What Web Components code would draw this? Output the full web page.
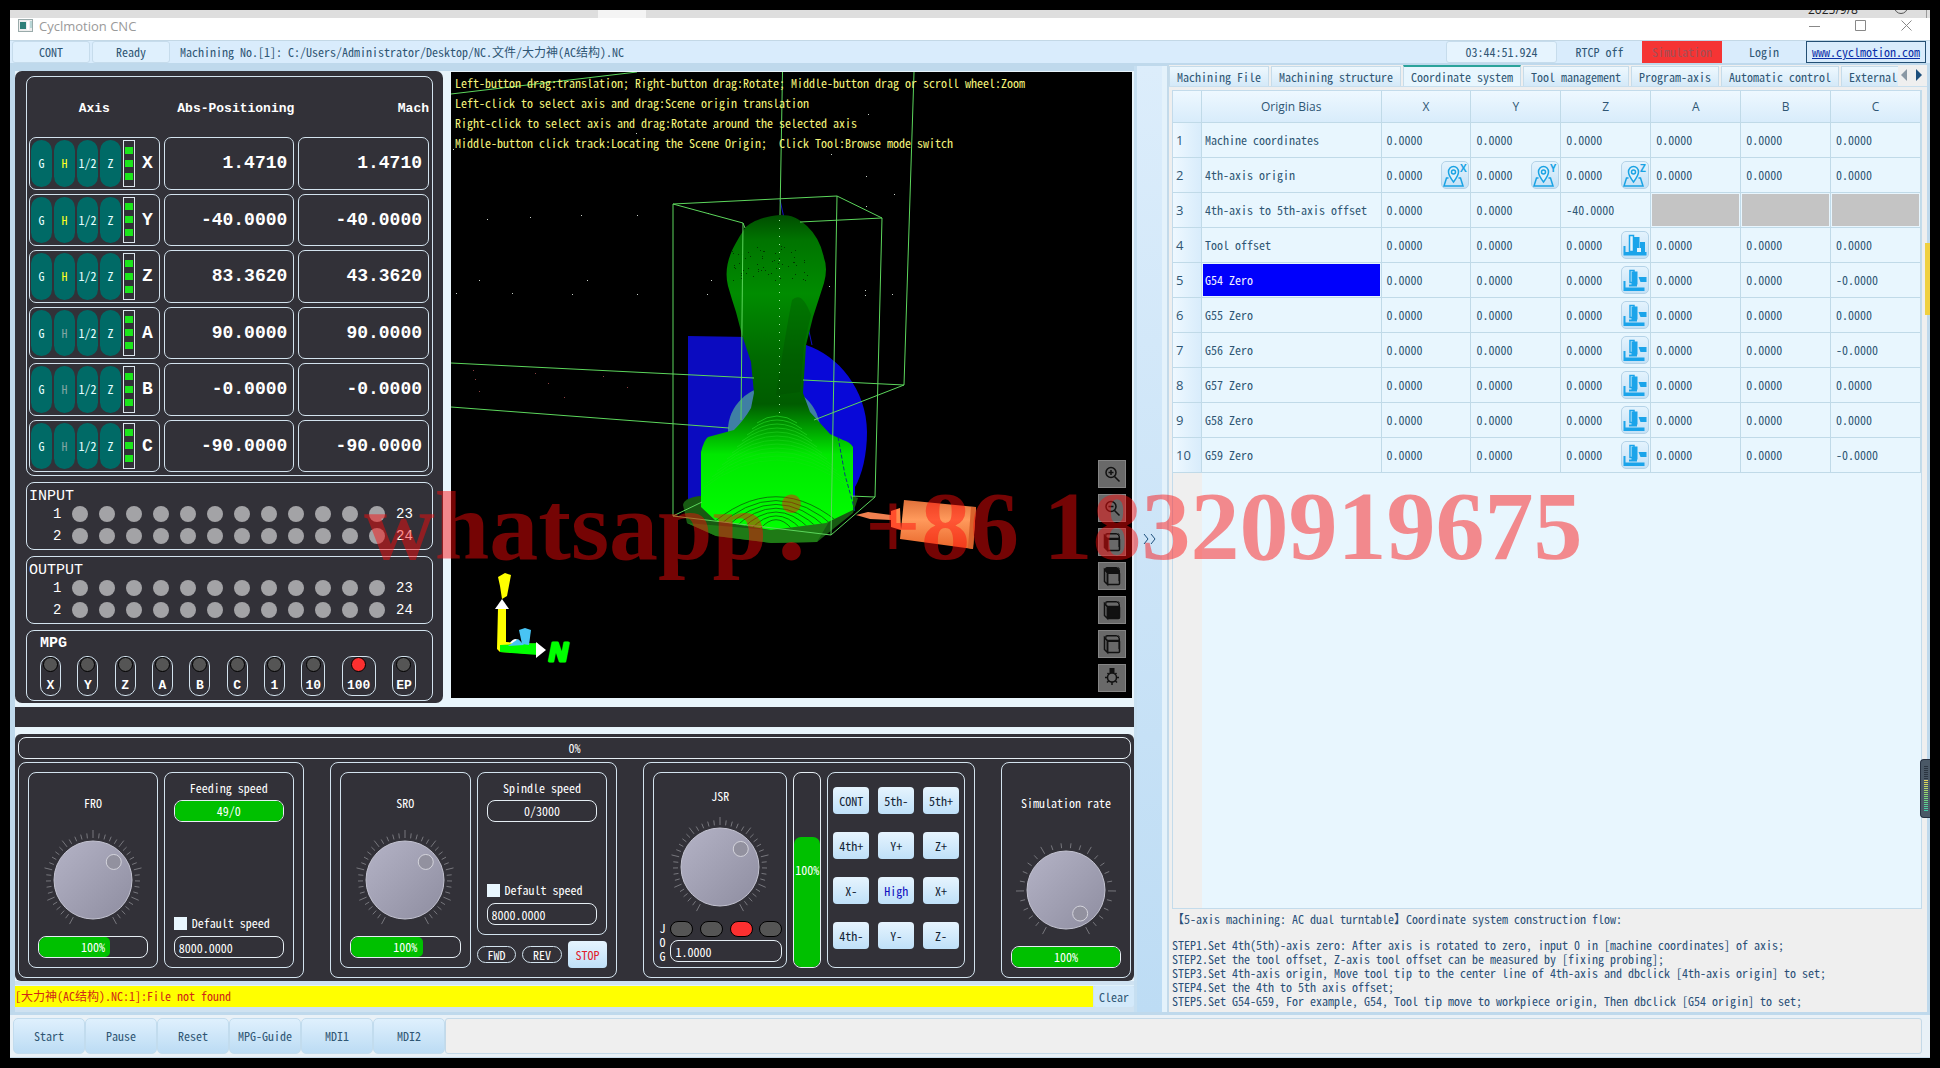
<!DOCTYPE html>
<html lang="en">
<head>
<meta charset="utf-8">
<title>Cyclmotion CNC</title>
<style>
html,body{margin:0;height:100%;background:#000}
body{
  --mono:"Noto Sans Mono CJK SC","Liberation Mono","Noto Sans CJK SC",monospace;
  --slab:"Liberation Mono","Noto Sans CJK SC",monospace;
  --ui:"Open Sans","Noto Sans",sans-serif;
  --ink:#2f5674; --dark:#323138; --line:#d3e3ee; --sky:#e8f6fe; --edge:#bfd9ec;
  --button:linear-gradient(#e6f4fe,#bfe0f8);
  font:12px/14px var(--mono);color:var(--ink);overflow:hidden}
</style>
</head>
<body>
<cnc-app></cnc-app>
<script>
const BASE = `*{box-sizing:border-box}button,input{font:inherit;color:inherit;margin:0;padding:0}button{cursor:pointer;border:0;background:none}`;
function define(name, css, render){
  customElements.define(name, class extends HTMLElement{
    connectedCallback(){
      if(this.shadowRoot) return;
      const root = this.attachShadow({mode:'open'});
      root.innerHTML = `<style>${BASE}${css}</style>` + render(this);
    }
  });
}
const attr = (el, n, d='') => el.getAttribute(n) ?? d;

/* ---------- window chrome ---------- */
define('cnc-desktop-strip', `
:host{display:flex;height:8px;background:#dedede;overflow:hidden;justify-content:flex-end;align-items:flex-end;color:#222}
.tab{width:48px;height:8px;background:#f4f4f4;margin-right:auto;margin-left:30.6%}
.date{font:12px/13px var(--ui);width:66px;height:13px;margin-bottom:2px}
.moon{width:14px;height:14px;border:1px solid #555;border-radius:50%;margin:0 18px 4px 20px;flex:none}
.end{width:1px;height:8px;background:#999;margin-right:3px}`,
()=>`<span class="tab"></span><span class="date">2025/9/8</span><span class="moon"></span><span class="end"></span>`);

define('cnc-titlebar', `
:host{display:flex;height:22px;background:#fff;align-items:center;padding:0 8px 7px 8px;gap:6px;font:13px/16px var(--ui);color:#9a9a9a}
.title{flex:1}
button{width:32px;height:16px;margin-left:8px}button svg{display:block;margin:auto}`,
()=>`<svg width="15" height="13" viewBox="0 0 15 13"><rect x=".5" y=".5" width="14" height="12" fill="#eee" stroke="#9aa"/><rect x="2" y="3" width="6" height="7" fill="#2f7f78"/><rect x="9" y="2" width="2" height="9" fill="#fff"/><rect x="12" y="2" width="2" height="7" fill="#b8d6d6"/></svg>
<span class="title">Cyclmotion CNC</span>
<button aria-label="Minimize"><svg width="11" height="11"><path d="M0 6.5h11" stroke="#888"/></svg></button>
<button aria-label="Maximize"><svg width="11" height="11"><path d="M.5.5h10v10h-10z" stroke="#888" fill="none"/></svg></button>
<button aria-label="Close"><svg width="11" height="11"><path d="M.5.5l10 10M10.500.5l-10 10" stroke="#888"/></svg></button>`);

define('cnc-toolbar', `
:host{display:flex;height:23px;background:#d9ecfc;border-top:1px solid #c3d8e6;padding:0 4px 0 2px;align-items:stretch}
.box{border:1px solid #c6dcec;border-radius:3px;background:#dff0fd;display:flex;align-items:center;justify-content:center}
.state{width:78px;margin-right:2px}
.path{flex:1;padding-left:8px;align-self:center}
.time{width:111px;background:#e6f4fe}.rtcp{width:85px}.sim{width:80px}.login{width:84px}
.plain{display:flex;align-items:center;justify-content:center}
.sim{background:#f53434;color:#a35058}
a{width:120px;border:1px solid #234f74;color:#0b2ea8;text-decoration:underline;display:flex;align-items:center;justify-content:center}`,
()=>`<span class="box state">CONT</span><span class="box state">Ready</span>
<span class="path">Machining No.[1]: C:/Users/Administrator/Desktop/NC.文件/大力神(AC结构).NC</span>
<span class="box time">03:44:51.924</span><button class="plain rtcp">RTCP off</button><button class="plain sim">Simulation</button><button class="plain login">Login</button><a href="#">www.cyclmotion.com</a>`);

/* ---------- axis panel ---------- */
define('axis-row', `
:host{display:grid;grid-template-columns:repeat(3,minmax(0,1fr));gap:4px;color:#fff;flex:1;min-height:0}
.cell{border:1px solid var(--line);border-radius:7px;display:flex;align-items:center;justify-content:flex-end;padding:2px 6px;font:bold 18px/22px var(--slab)}
.ctl{padding:2px 1px;gap:2px;font:12px/14px var(--mono);justify-content:flex-start;align-items:stretch}
button{width:21px;border-radius:11px;background:#006a66;color:#e6ffff;text-align:center}
.h{color:#ffff20}.off{color:#7fa5a2}
.led{width:12px;border:1px solid #dce6ee;display:flex;flex-direction:column;align-items:center;justify-content:center;gap:6px}
.led i{width:8px;height:7px;background:#1be61b}
b{flex:1;font:bold 18px/22px var(--slab);align-self:center;text-align:center}`,
el=>`<div class="cell ctl"><button>G</button><button class="${el.hasAttribute('homed')?'h':'off'}">H</button><button>1/2</button><button>Z</button><span class="led"><i></i><i></i><i></i></span><b>${attr(el,'axis')}</b></div>
<div class="cell">${attr(el,'abs')}</div><div class="cell">${attr(el,'mach')}</div>`);

define('io-block', `
:host{display:block;border:1px solid var(--line);border-radius:8px;color:#fff;height:68px;padding:4px 0 0 2px;font:15px/20px var(--slab)}
.title{height:16px}
.row{display:flex;align-items:center;height:22px;padding-left:24px;gap:11px;font-size:14px}
.row span{width:9px}.row i{width:16px;height:16px;border-radius:50%;background:#a3a3a6}
.row .n{width:20px}.row span+i{margin-left:-1px}`,
el=>{const dots='<i></i>'.repeat(12);return `<div class="title">${attr(el,'name')}</div><div class="row"><span>1</span>${dots}<span class="n">23</span></div><div class="row"><span>2</span>${dots}<span class="n">24</span></div>`});

define('mpg-block', `
:host{display:block;border:1px solid var(--line);border-radius:8px;height:71px;color:#fff;font:bold 15px/20px var(--slab);padding:3px 16px 4px 13px}
.row{display:flex;justify-content:space-between;margin-top:2px}
label{min-width:20px;padding:0 2px;height:40px;border:1px solid var(--line);border-radius:10px;display:flex;flex-direction:column;align-items:center;justify-content:space-between;font:bold 13px/16px var(--slab);padding-bottom:1px}
input{appearance:none;width:15px;height:15px;border:1px solid #000;border-radius:50%;background:#555}
input:checked{background:#fb3030}
.w2{min-width:24px}.w3{min-width:34px}`,
()=>`<div>MPG</div><div class="row">${['X','Y','Z','A','B','C','1','10','100','EP'].map(t=>`<label class="w${t.length}"><input type="radio" name="mpg" ${t==='100'?'checked':''}>${t}</label>`).join('')}</div>`);

define('axis-panel', `
:host{display:flex;flex-direction:column;gap:6px;background:var(--dark);border-radius:7px;padding:5px 10px 2px 11px}
.axes{flex:1;min-height:0;display:flex;flex-direction:column;border:1px solid var(--line);border-radius:8px;padding:0 3px 3px 2px}
.head{display:grid;grid-template-columns:repeat(3,minmax(0,1fr));gap:4px;height:60px;padding-top:4px;align-items:center;color:#fff;font:bold 13px/16px var(--slab);text-align:right}
.head :first-child{text-align:center}
.rows{flex:1;min-height:0;display:flex;flex-direction:column;gap:4px}`,
()=>`<div class="axes"><div class="head"><span>Axis</span><span>Abs-Positioning</span><span>Mach</span></div><div class="rows">
<axis-row axis="X" homed abs="1.4710" mach="1.4710"></axis-row>
<axis-row axis="Y" homed abs="-40.0000" mach="-40.0000"></axis-row>
<axis-row axis="Z" homed abs="83.3620" mach="43.3620"></axis-row>
<axis-row axis="A" abs="90.0000" mach="90.0000"></axis-row>
<axis-row axis="B" abs="-0.0000" mach="-0.0000"></axis-row>
<axis-row axis="C" abs="-90.0000" mach="-90.0000"></axis-row></div></div>
<io-block name="INPUT"></io-block><io-block name="OUTPUT"></io-block><mpg-block></mpg-block>`);

/* ---------- 3D view ---------- */
const cube = face => `<path d="M7 9l2-3h12v13" fill="none" stroke="#111"/><path d="M6.500 7.500l3 3v12l-3-3z" fill="${face==='left'?'#111':'none'}" stroke="#111" stroke-width="1.500"/><path d="M6.500 7l2-1.500h10l3 3v3H9.500z" fill="${face==='top'?'#111':'none'}" stroke="#111"/><rect x="9.500" y="10.500" width="12" height="12" rx="1" fill="${face==='front'?'#111':'none'}" stroke="#111" stroke-width="1.500"/>`;
const viewIcons = {
  'Zoom in':'<circle cx="13" cy="12.500" r="5" fill="none" stroke="#111" stroke-width="1.500"/><path d="M13 10v5M10.500 12.500h5M16.500 16.500l5 5" stroke="#111" stroke-width="1.500"/>',
  'Zoom out':'<circle cx="13" cy="12.500" r="5" fill="none" stroke="#111" stroke-width="1.500"/><path d="M10.500 12.500h5M16.500 16.500l5 5" stroke="#111" stroke-width="1.500"/>',
  'Left view':cube('left'),'Top view':cube('top'),'Front view':cube('front'),'Isometric view':cube(''),
  'Light':'<rect x="11.500" y="4" width="5" height="5" fill="#111"/><circle cx="14" cy="13.500" r="4.500" fill="none" stroke="#111" stroke-width="1.500"/><path d="M7 13.500h2.500M18.500 13.500H21M9 18.500l2-2M19 18.500l-2-2M14 18V21M9.500 9l1.500 1.500M18.500 9l-1.500 1.500" stroke="#111" stroke-width="1.500"/>'
};
const stars = [[453,149],[487,219],[530,217],[581,215],[637,215],[708,213],[868,114],[866,176],[896,81],[831,154],[894,194],[866,206],[479,280],[587,280],[711,280],[456,293],[512,293],[572,294],[637,294],[707,294],[865,290],[865,295],[892,294],[829,286],[636,133],[713,128],[473,370],[535,373],[603,376],[548,383],[475,379],[627,387],[479,391],[564,397]];
const contours = (()=>{let s='';
  for(let i=0;i<12;i++){const y=416+i*4,w=20+i*5,h=7+i*2;s+=`<path d="M${777-w} ${y+h}Q777 ${y-h} ${777+w} ${y+h}" stroke="#28dc28" stroke-opacity="${.65-i*.04}"/>`}
  for(let i=0;i<7;i++){const r=16+i*9;s+=`<path d="M${776-r} 529Q776 ${524-r*.85} ${776+r} 529" stroke="#0a7a0a"/>`}
  return s})();
const speckle = (()=>{let s='',k=7;for(let i=0;i<60;i++){k=(k*137+71)%1009;const x=732+k%76;k=(k*137+71)%1009;s+=`<rect x="${x}" y="${246+k%36}" width="1" height="1"/>`}return s})();
const bodyPath = 'M780 215C764 216 750 222 745 228C737 240 732 250 731 253Q724 270 728 286Q732 300 736 312L742 335L751 362L754 393L751 408Q744 420 734 430L708 437Q704 440 701 452V507L716 521L771 530L826 523L853 510V447Q850 442 843 440L830 434L810 412L803 393L806 345L813 317L824 283Q828 268 824 258Q820 238 807 226C798 218 792 215 780 215Z';

define('scene-view', `
:host{display:grid;position:relative;background:#000;overflow:hidden;min-height:0;min-width:0}
.scene{grid-area:1/1;width:100%;height:100%;min-height:0;display:block}
.help{grid-area:1/1;margin:0;padding:1px 4px;color:#f4f47c;line-height:20px;position:relative;white-space:pre}
.tools{position:absolute;right:6px;bottom:6px;display:flex;flex-direction:column;gap:6px}
.tools button{width:28px;height:28px;background:#696969;border:1px solid #858585}
.tools svg{display:block;width:26px;height:26px}`,
()=>`<svg class="scene" viewBox="451 72 681 626" preserveAspectRatio="xMidYMid slice" aria-label="Tool path scene">
<defs>
<linearGradient id="body" x1="0" y1="0" x2="0" y2="1"><stop offset="0" stop-color="#004d00"/><stop offset=".08" stop-color="#007400"/><stop offset=".25" stop-color="#008c00"/><stop offset=".45" stop-color="#006a00"/><stop offset=".6" stop-color="#005c00"/><stop offset=".66" stop-color="#009000"/><stop offset=".76" stop-color="#00e800"/><stop offset="1" stop-color="#00ff00"/></linearGradient>
<linearGradient id="steel" x1="0" y1="0" x2="0" y2="1"><stop offset="0" stop-color="#e0713a"/><stop offset=".4" stop-color="#ff9a5c"/><stop offset="1" stop-color="#e8662a"/></linearGradient>
<clipPath id="solid"><path d="${bodyPath}"/></clipPath>
</defs>
<g fill="#c8d0c8">${stars.map(([x,y],i)=>`<rect x="${x}" y="${y}" width="1" height="1"${i>25?' fill="#8a4040"':''}/>`).join('')}</g>
<path d="M688 336L803 338V505H688Z" fill="#0b0bc0"/>
<path d="M806 345C838 355 867 390 867 432C867 455 862 475 855 487V505H780V345Z" fill="#0808d8"/>
<path d="M780 200L812 345" stroke="#1010c0"/>
<ellipse cx="774" cy="430" rx="46" ry="44" fill="#3f7fa4"/>
<path d="M700 496Q684 498 683 505L687 523L716 536L771 543L817 542L853 513L858 498L850 495Z" fill="#175a12"/>
<path d="M687 523L716 536L771 543L817 542L830 520L771 530Z" fill="#1f7a16"/>
<path d="${bodyPath}" fill="url(#body)"/>
<path d="M792 300Q786 330 776 395L800 392L804 345L811 315Q802 290 792 300Z" fill="#004a00" opacity=".3"/>
<g clip-path="url(#solid)" fill="none" stroke-width="1">${contours}</g>
<g fill="#003a00">${speckle}</g>
<path d="M779.500 220V420" stroke="#a0e8a0" stroke-dasharray="1 7"/>
<g fill="none" stroke="#5cd65c" stroke-width="1">
<path d="M451 94L637 72M782.500 72L780 215M914 72L904 385L814 420M451 363L754 378M803 380L904 385M451 407L729 428"/>
<path d="M745 228L743 223L673 204L837 196L882 218L800 222M673 204V516L831 535L875 497L882 218M837 196L831 535M743 223L741 420M673 516L702 502M875 497L850 496"/>
</g>
<path d="M838 437L845 475L852 500L855 512" stroke="#0a3a80" fill="none" stroke-dasharray="4 2"/>
<path d="M856 515L868 512L891 515V520L870 519Z" fill="#f08050"/>
<path d="M891 511L900 508L901 530L891 527Z" fill="#ff8a4a"/>
<path d="M904 500L976 507L973 549L900 539Z" fill="url(#steel)"/><path d="M971 507L976 507L973 549L968 548Z" fill="#d8622c"/>
<path d="M497 649L498 608H506V642L537 644V654L500 652Z" fill="#ff0"/>
<path d="M500 645L538 643V655L500 652Z" fill="#0f0"/>
<path d="M495 609L502 599L509 609Z" fill="#fff"/><path d="M498 577L505 573L511 575L507 596L502 599L500 586Z" fill="#ff0"/>
<path d="M510 643Q516 634 523 645Z" fill="#fff"/><path d="M508 646L518 639L524 645Z" fill="#48c4f4"/><path d="M519 630L525 628L531 630L529 645L522 644Z" fill="#48c4f4"/>
<path d="M536 642L546 650L536 658Z" fill="#fff"/>
<text x="549" y="661" font-family="Liberation Sans,sans-serif" font-size="26" font-weight="bold" font-style="italic" fill="#0f0" stroke="#0f0" stroke-width="3" stroke-linejoin="round">N</text>
</svg>
<p class="help">Left-button drag:translation; Right-button drag:Rotate; Middle-button drag or scroll wheel:Zoom
Left-click to select axis and drag:Scene origin translation
Right-click to select axis and drag:Rotate around the selected axis
Middle-button click track:Locating the Scene Origin;  Click Tool:Browse mode switch</p>
<div class="tools">${Object.entries(viewIcons).map(([k,v])=>`<button aria-label="${k}"><svg viewBox="1 1 26 26">${v}</svg></button>`).join('')}</div>`);

/* ---------- override controls ---------- */
define('progress-bar', `
:host{display:grid;height:22px;border:1px solid #e6eef4;border-radius:8px;overflow:hidden;color:#fff;align-items:center;flex:none}
i{grid-area:1/1;height:100%;background:#00c000;border-radius:7px 5px 5px 7px}
span{grid-area:1/1;text-align:center}
:host([vertical]){height:auto;width:28px;align-items:end}
:host([vertical]) i{width:100%;border-radius:7px}
:host([vertical]) span{align-self:center}`,
el=>{const v=attr(el,'fill','0');return `<i style="${el.hasAttribute('vertical')?'height':'width'}:${v}%"></i><span>${attr(el,'text')}</span>`});

define('rate-knob', `
:host{display:grid;width:104px;height:104px;align-self:center;flex:none}
svg,input{grid-area:1/1;width:104px;height:104px}
input{opacity:0;cursor:pointer}`,
el=>{const n=+attr(el,'ticks','40'),a=+attr(el,'angle','49'),r=Math.PI/180;let t='';
for(let i=0;i<=n;i++){const g=(-152+304*i/n)*r,o=i%5?47:50;t+=`M${(52+42*Math.sin(g)).toFixed(1)} ${(52-42*Math.cos(g)).toFixed(1)}L${(52+o*Math.sin(g)).toFixed(1)} ${(52-o*Math.cos(g)).toFixed(1)}`}
return `<svg viewBox="0 0 104 104"><defs><linearGradient id="k" x1="0" y1="0" x2="1" y2="1"><stop offset="0" stop-color="#b4b3c6"/><stop offset="1" stop-color="#8e8da0"/></linearGradient></defs><path d="${t}" stroke="#77777d"/><circle cx="52" cy="52" r="39" fill="url(#k)" stroke="#c4c4d2"/><circle cx="${52+27.500*Math.sin(a*r)}" cy="${52-27.500*Math.cos(a*r)}" r="7.500" fill="#92919f" stroke="#d4d4dc"/></svg><input type="range" min="0" max="150" value="100" aria-label="${attr(el,'label')}">`});

const BOX = `.box{border:1px solid var(--line);border-radius:8px;display:flex;flex-direction:column;padding:4px 9px 9px}
.name{flex:1;display:flex;align-items:center;justify-content:center}
.field{width:100%;height:22px;border:1px solid #e6eef4;border-radius:8px;background:none;color:#fff;padding:0 4px;min-width:0;flex:none}
.check{display:flex;align-items:center;gap:5px;margin-bottom:6px}
.check input{appearance:none;width:13px;height:13px;background:var(--sky)}
.top{text-align:center;padding-top:4px;height:23px;flex:none}`;

define('feed-override', `
:host{display:grid;grid-template-columns:minmax(0,1fr) minmax(0,1fr);gap:6px;border:1px solid var(--line);border-radius:8px;padding:9px}
${BOX}
.side{display:flex;flex-direction:column;min-height:0}.side .box{flex:1;min-height:0}
.fill{flex:1}
.acts{display:grid;grid-template-columns:1fr 1fr 1fr;gap:6px;align-items:center;height:27px;margin-top:6px}
.acts button{height:17px;border:1px solid var(--line);border-radius:9px;line-height:14px}
.acts .stop{height:27px;border:0;border-radius:4px;background:var(--button);color:#e0202c}`,
el=>`<div class="box"><span class="name">${attr(el,'name')}</span><rate-knob label="${attr(el,'name')}"></rate-knob><progress-bar style="margin-top:4px" fill="66" text="100%"></progress-bar></div>
<div class="side"><div class="box"><div class="top">${attr(el,'title')}</div><progress-bar fill="${attr(el,'fill')}" text="${attr(el,'value')}"></progress-bar><span class="fill"></span>
<label class="check"><input type="checkbox">Default speed</label><input class="field" aria-label="${attr(el,'title')}" value="8000.0000"></div>
${el.hasAttribute('spindle')?'<div class="acts"><button>FWD</button><button>REV</button><button class="stop">STOP</button></div>':''}</div>`);

define('jog-override', `
:host{display:grid;grid-template-columns:minmax(0,134fr) 28px minmax(0,138fr);gap:6px;border:1px solid var(--line);border-radius:8px;padding:9px}
${BOX}
.box{padding:4px 4px 4px}
.jog{display:grid;grid-template-columns:8px minmax(0,1fr);gap:0 4px;margin-top:2px}
.v{grid-row:1/3;display:flex;flex-direction:column;align-items:center;justify-content:center}
.leds{display:flex;justify-content:space-between;height:16px;margin-bottom:2px}
.leds i{width:23px;height:16px;border:1px solid #000;border-radius:8px;background:#555}.leds .on{background:#fb3030}
.keys{border:1px solid var(--line);border-radius:8px;display:grid;grid-template-columns:repeat(3,36px);grid-auto-rows:27px;justify-content:space-between;align-content:space-between;padding:14px 5px 18px}
.keys button{border-radius:4px;background:var(--button);color:#123}.keys .hi{color:#1010c0}`,
()=>`<div class="box"><span class="name">JSR</span><rate-knob label="JSR"></rate-knob><div class="jog"><span class="v"><span>J</span><span>O</span><span>G</span></span><div class="leds"><i></i><i></i><i class="on"></i><i></i></div><input class="field" aria-label="JOG step" value="1.0000"></div></div>
<progress-bar vertical fill="67" text="100%"></progress-bar>
<div class="keys">${['CONT','5th-','5th+','4th+','Y+','Z+','X-','High','X+','4th-','Y-','Z-'].map(k=>`<button${k==='High'?' class="hi"':''}>${k}</button>`).join('')}</div>`);

define('sim-rate', `:host{display:flex}${BOX}.box{flex:1}`,
()=>`<div class="box"><span class="name">Simulation rate</span><rate-knob ticks="25" angle="149" label="Simulation rate"></rate-knob><progress-bar style="margin-top:4px" fill="100" text="100%"></progress-bar></div>`);

define('override-panel', `
:host{display:flex;flex-direction:column;gap:3px;height:247px;background:var(--dark);border-radius:6px;padding:3px;color:#fff}
.groups{flex:1;min-height:0;display:grid;grid-template-columns:minmax(0,286fr) minmax(0,288fr) minmax(0,332fr) minmax(0,130fr);gap:26px}`,
()=>`<progress-bar fill="0" text="0%"></progress-bar><div class="groups">
<feed-override name="FRO" title="Feeding speed" value="49/0" fill="100"></feed-override>
<feed-override name="SRO" title="Spindle speed" value="0/3000" fill="0" spindle></feed-override>
<jog-override></jog-override><sim-rate></sim-rate></div>`);

define('message-bar', `
:host{display:flex;height:22px;gap:1px;border-top:1px solid #dff1fb}
span{flex:1;background:#ff0;color:#d02818;padding:3px 0 0 0}
button{width:40px;color:var(--ink);background:#d3e9fa;border-radius:3px}`,
()=>`<span role="status">[大力神(AC结构).NC:1]:File not found</span><button>Clear</button>`);

/* ---------- right side ---------- */
define('tab-strip', `
:host{display:flex;align-items:flex-end;gap:2px;height:22px;border-bottom:1px solid #c9dfee}
button{flex:none;height:20px;padding:0 7px;border:1px solid #c6dcea;border-bottom:0;background:linear-gradient(#eef8fe,#d4e9f8);white-space:nowrap}
.on{height:21px;background:#e8f6fe;border-top:2px solid #2ba39b}
.last{flex:0 1 62px;min-width:0;overflow:hidden;border-right:0}
.arrows{margin-left:auto;display:flex;gap:7px;align-self:center;padding-right:4px}
.arrows button{width:8px;height:14px;padding:0;border:0;background:none}`,
()=>['Machining File','Machining structure','Coordinate system','Tool management','Program-axis','Automatic control','External'].map((t,i)=>`<button role="tab" class="${i===2?'on':i===6?'last':''}">${t}</button>`).join('')+
`<span class="arrows"><button aria-label="Previous tabs"><svg width="8" height="12"><path d="M7 0v12L1 6z" fill="#8a98a4"/></svg></button><button aria-label="Next tabs"><svg width="8" height="12"><path d="M1 0v12l6-6z" fill="#1d4f7c"/></svg></button></span>`);

const pin = l=>`<svg viewBox="1 1 26 26"><path d="M7.500 17H5.500L3 25h19l-2.500-8h-2" fill="none" stroke="#1aa3e4" stroke-width="1.500"/><path d="M12.500 21C9.500 17 7.500 14 7.500 11a5 5.500 0 0 1 10 0c0 3-2 6-5 10z" fill="#dff1fb" stroke="#1aa3e4" stroke-width="1.500"/><circle cx="12.500" cy="11" r="2" fill="none" stroke="#1aa3e4" stroke-width="1.500"/><text x="19" y="11" font-size="10" font-weight="bold" font-family="Open Sans,sans-serif" fill="#1aa3e4">${l}</text></svg>`;
const probe = `<svg viewBox="1 1 26 26" fill="#1ba4ea"><path d="M2.500 15h2v6h21v3.500h-23z"/><path d="M8.500 4.500h4v16h-4z" fill="#e6f4fc" stroke="#1ba4ea" stroke-width="1.500"/><path d="M12.500 6h6v15h-6zM19 11h5v10h-5z"/><path d="M16 21v-4h4v4z" fill="#e6f4fc"/></svg>`;
const mill = `<svg viewBox="1 1 26 26" fill="#1ba4ea"><path d="M2.500 15h2v6.500h19v3.500h-21z"/><path d="M9 4.500h4v12h-4z" fill="#e6f4fc" stroke="#1ba4ea" stroke-width="1.500"/><path d="M10.500 5.500h6v13h-6zM17.500 11h8v5h-6zM8 18.500h8v2H8z"/></svg>`;
const Z='0.0000';
const rows=[['Machine coordinates',Z,Z,Z,Z,Z,Z],['4th-axis origin',Z,Z,Z,Z,Z,Z],['4th-axis to 5th-axis offset',Z,Z,'-40.0000',null,null,null],['Tool offset',Z,Z,Z,Z,Z,Z],
['G54 Zero',Z,Z,Z,Z,Z,'-0.0000'],['G55 Zero',Z,Z,Z,Z,Z,Z],['G56 Zero',Z,Z,Z,Z,Z,'-0.0000'],['G57 Zero',Z,Z,Z,Z,Z,Z],['G58 Zero',Z,Z,Z,Z,Z,Z],['G59 Zero',Z,Z,Z,Z,Z,'-0.0000']];
const cellIcon=(r,c)=>r===1&&c>0&&c<4?pin('XYZ'[c-1]):r===3&&c===3?probe:r>3&&c===3?mill:'';
define('coord-table', `
:host{display:block;flex:1;min-height:0;border:1px solid #c3dbeb;background:linear-gradient(90deg,#efefef 29px,var(--sky) 29px)}
table{width:100%;border-collapse:separate;border-spacing:0;table-layout:fixed;background:var(--sky)}
th,td{border-right:1px solid #c0dae8;border-bottom:1px solid #c0dae8;padding:0 0 0 5px;height:35px;text-align:left;font-weight:400}
thead th{height:32px;font:12px/16px var(--ui);text-align:center;padding:0;background:linear-gradient(#eef8ff,#d8ecfb)}
tbody th{font:13px/16px var(--ui);padding-left:3px;background:linear-gradient(90deg,#eef8ff,#d8ecfb)}
td:nth-child(2){padding-left:3px}
.dead{padding:1px;height:35px}.dead i{display:block;height:32px;background:#c4c4c4}
.sel{background:#0000fc;color:#f4f4ff;box-shadow:inset 0 0 0 1px var(--sky)}
.v{display:flex;align-items:center;justify-content:space-between;padding-right:1px}
button{width:28px;height:28px;border:1px solid #b4d3e8;border-radius:5px;background:linear-gradient(#e4f3fd,#c4e1f6)}
button svg{display:block;width:26px;height:26px}
.c0{width:29px}.c1{width:24%}`,
()=>`<table><colgroup><col class="c0"><col class="c1"><col><col><col><col><col><col></colgroup><thead><tr><th></th>${['Origin Bias','X','Y','Z','A','B','C'].map(h=>`<th>${h}</th>`).join('')}</tr></thead><tbody>${rows.map((r,i)=>`<tr><th>${i+1}</th>${r.map((v,c)=>v===null?'<td class="dead"><i></i></td>':`<td${i===4&&c===0?' class="sel"':''}><div class="v"><span>${v}</span>${cellIcon(i,c)?`<button aria-label="Set ${r[0]}">${cellIcon(i,c)}</button>`:''}</div></td>`).join('')}</tr>`).join('')}</tbody></table>`);

define('coord-page', `
:host{display:flex;flex-direction:column;background:#efefef;border-left:2px solid #c3daea;min-width:0}
.body{flex:1;min-height:0;display:flex;flex-direction:column;padding:3px 5px 4px 3px}
p{margin:0;white-space:pre-wrap;color:#2a5078}
.t{margin:3px 0 12px}`,
()=>`<tab-strip></tab-strip><div class="body"><coord-table></coord-table><p class="t">【5-axis machining: AC dual turntable】Coordinate system construction flow:</p>
<p>STEP1.Set 4th(5th)-axis zero: After axis is rotated to zero, input 0 in [machine coordinates] of axis;
STEP2.Set the tool offset, Z-axis tool offset can be measured by [fixing probing];
STEP3.Set 4th-axis origin, Move tool tip to the center line of 4th-axis and dbclick [4th-axis origin] to set;
STEP4.Set the 4th to 5th axis offset;
STEP5.Set G54-G59, For example, G54, Tool tip move to workpiece origin, Then dbclick [G54 origin] to set;</p></div>`);

define('cnc-footer', `
:host{display:flex;height:43px;background:#e9f1f7;padding:3px 8px 3px 3px;gap:0;border-bottom:1px solid #c8dceb}
button{width:72px;border:1px solid #c2dcee;border-radius:5px;background:linear-gradient(#dff0fd,#bcdcf4)}
span{flex:1;background:#efefef;border:1px solid #c4d9e8;border-radius:3px}`,
()=>['Start','Pause','Reset','MPG-Guide','MDI1','MDI2'].map(t=>`<button>${t}</button>`).join('')+'<span></span>');

define('cnc-app', `
:host{display:flex;flex-direction:column;height:100vh;padding:10px;background:#000;position:relative;box-sizing:border-box}
main{flex:1;min-height:0;display:grid;grid-template-columns:minmax(0,1119fr) 33px minmax(0,760fr);background:var(--edge);padding:8px 3px 3px 5px}
.left{display:flex;flex-direction:column;min-height:0;background:#e8f4fb}
.work{flex:1;min-height:0;display:grid;grid-template-columns:minmax(0,428fr) minmax(0,683fr);gap:8px;margin-bottom:4px}
scene-view{margin:1px 2px 5px 0}
.bar{height:20px;background:var(--dark);margin-bottom:7px}
.lower{background:#cfe2f1;padding:4px 0 5px}
.split{display:flex;align-items:center;justify-content:center;border-right:5px solid #e4f2fb;border-left:3px solid #c6dff1;background:linear-gradient(#dcedfb,#bddcf4);margin-top:-5px}
coord-page{margin-top:-6px}
.mark{position:absolute;left:364px;top:464px;margin:0;font:bold 98px/124px "Liberation Serif","Noto Sans CJK SC",serif;color:rgba(255,8,8,.46);white-space:nowrap;pointer-events:none}
.note{position:absolute;right:10px;top:243px;width:5px;height:72px;background:#f0d040}
.meter{position:absolute;right:10px;top:759px;width:10px;height:59px;background:#4a5866;border:1px solid #263040;border-right:0;border-radius:4px 0 0 4px;padding:6px 2px 6px 3px}
.meter i{display:block;height:100%;background:linear-gradient(#2a3440 30%,#e8d858 32%,#7ad878 70%,#40c8a8);-webkit-mask:repeating-linear-gradient(#000 0 1px,transparent 1px 2px)}`,
()=>`<cnc-desktop-strip></cnc-desktop-strip><cnc-titlebar></cnc-titlebar><cnc-toolbar></cnc-toolbar>
<main><section class="left"><div class="work"><axis-panel></axis-panel><scene-view></scene-view></div><div class="bar"></div><override-panel></override-panel><div class="lower"><message-bar></message-bar></div></section>
<button class="split" aria-label="Collapse panel"><svg width="14" height="10"><path d="M1 0l4 5-4 5M8 0l4 5-4 5" fill="none" stroke="#1d4f7c"/></svg></button>
<coord-page></coord-page></main><cnc-footer></cnc-footer>
<i class="note"></i><div class="meter"><i></i></div><p class="mark">whatsapp：+86 18320919675</p>`);
</script>
</body>
</html>
